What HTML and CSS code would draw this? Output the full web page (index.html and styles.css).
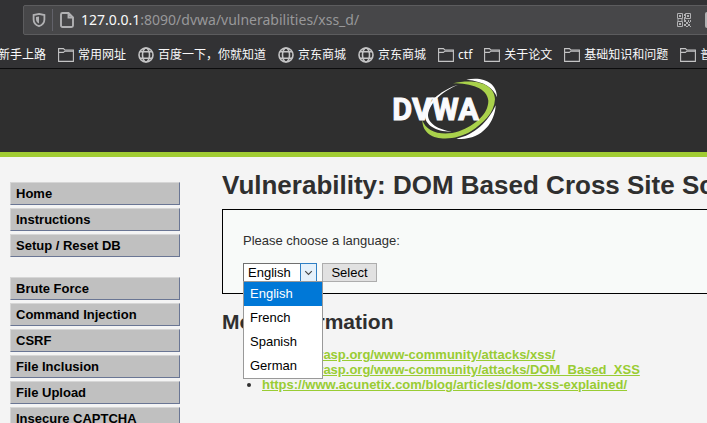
FILE: index.html
```html
<!DOCTYPE html>
<html lang="en">
<head>
<meta charset="utf-8">
<title>Vulnerability: DOM Based Cross Site Scripting (XSS)</title>
<link rel="stylesheet" href="styles.css">
</head>
<body>
<svg class="defs" aria-hidden="true">
  <symbol id="folder" viewBox="0 0 16 16"><path d="M.6 14.400V1.600H5.400L6.800 3H15.400V14.400zM.6 5.400H5.400L6.800 4.200H15" fill="none" stroke="currentColor" stroke-width="1.100"/></symbol>
  <symbol id="globe" viewBox="0 0 16 16"><g fill="none" stroke="currentColor" stroke-width="1.600"><circle cx="8" cy="8" r="7"/><ellipse cx="8" cy="8" rx="3.500" ry="7"/><path d="M2 4.700h12M2 11.300h12"/></g></symbol>
</svg>
<div class="browser">
  <div class="toolbar">
    <div class="urlbar">
      <svg class="shield" viewBox="0 0 14 16"><path d="M7 1.800 12.400 3V7.500c0 3.500-2.400 5.700-5.400 6.700C4 13.200 1.600 11 1.600 7.500V3z" fill="none" stroke="currentColor" stroke-width="1.800"/><path d="M7 4.500v7C5 10.500 4 9 4 7V5z" fill="currentColor"/></svg>
      <span class="divider"></span>
      <svg class="page-icon" viewBox="0 0 14 16"><path d="M2.500 1H8.500L13 5.500V13.500a1.500 1.500 0 0 1-1.500 1.500h-9A1.500 1.500 0 0 1 1 13.500v-11A1.500 1.500 0 0 1 2.500 1zM8.500 1v4.500H13" fill="none" stroke="currentColor" stroke-width="1.900"/></svg>
      <span class="url"><b>127.0.0.1</b>:8090/dvwa/vulnerabilities/xss_d/</span>
      <svg class="qr" viewBox="0 0 14 14"><path d="M.5.5h5v5h-5zM8.500.5h5v5h-5zM.5 8.500h5v5h-5z" fill="none" stroke="currentColor"/><path d="M2 2h2v2H2zM10 2h2v2h-2zM2 10h2v2H2zM7 1h1v2H7zM7 4h1v3H7zM7 7h2v2H7zM9 9h2v2H9zM11 7h1v2h-1zM13 7h1v2h-1zM7 11h2v2H7zM11 11h2v2h-2zM12 9h1v1h-1zM9 13h2v1H9zM13 13h1v1h-1zM0 6.500h2v1H0zM4 6.500h2v1H4z" fill="currentColor"/></svg>
      <span class="edge"></span>
    </div>
  </div>
  <nav class="bookmarks">
    <a href="#">新手上路</a>
    <a href="#"><svg><use href="#folder"/></svg>常用网址</a>
    <a href="#"><svg><use href="#globe"/></svg>百度一下，你就知道</a>
    <a href="#"><svg><use href="#globe"/></svg>京东商城</a>
    <a href="#"><svg><use href="#globe"/></svg>京东商城</a>
    <a href="#"><svg><use href="#folder"/></svg>ctf</a>
    <a href="#"><svg><use href="#folder"/></svg>关于论文</a>
    <a href="#"><svg><use href="#folder"/></svg>基础知识和问题</a>
    <a href="#"><svg><use href="#folder"/></svg>普</a>
  </nav>
</div>
<div class="page">
  <header class="header">
    <svg class="logo" viewBox="36 24 324 186" role="img" aria-label="DVWA">
      <path d="M238 44C196 56 142 92 138 136C138 166 172 186 218 185C178 178 146 160 147 134C152 96 196 60 238 44z" fill="#fff"/>
      <path d="M262 29C312 18 354 38 354 82C344 54 316 34 262 29z" fill="#fff"/>
      <path d="M350 106C348 160 304 214 232 206C286 196 328 154 350 106z" fill="#fff"/>
      <path d="M222 40C284 26 346 38 348 88C346 130 312 160 276 184C220 218 130 216 130 150C140 186 190 200 240 184C290 164 328 132 328 92C324 54 276 40 222 40z" fill="#a9d14b"/>
      <text x="40" y="151" class="logo-text">DVWA</text>
    </svg>
  </header>
  <div class="columns">
    <nav class="menu">
      <ul>
        <li><a href="#">Home</a></li>
        <li><a href="#">Instructions</a></li>
        <li><a href="#">Setup / Reset DB</a></li>
      </ul>
      <ul>
        <li><a href="#">Brute Force</a></li>
        <li><a href="#">Command Injection</a></li>
        <li><a href="#">CSRF</a></li>
        <li><a href="#">File Inclusion</a></li>
        <li><a href="#">File Upload</a></li>
        <li><a href="#">Insecure CAPTCHA</a></li>
      </ul>
    </nav>
    <main class="content">
      <h1>Vulnerability: DOM Based Cross Site Scripting (XSS)</h1>
      <form class="panel">
        <label for="language">Please choose a language:</label>
        <div class="controls">
          <div class="picker">
            <select id="language"><option>English</option><option>French</option><option>Spanish</option><option>German</option></select>
            <svg class="arrow" viewBox="0 0 16 17"><path d="M4.500 7 8 10.500 11.500 7" fill="none" stroke="#444" stroke-width="1.200"/></svg>
            <ul class="options" role="listbox" aria-label="Language">
              <li role="option" aria-selected="true">English</li>
              <li role="option">French</li>
              <li role="option">Spanish</li>
              <li role="option">German</li>
            </ul>
          </div>
          <button type="button">Select</button>
        </div>
      </form>
      <h2>More Information</h2>
      <ul class="links">
        <li><a href="#">https://owasp.org/www-community/attacks/xss/</a></li>
        <li><a href="#">https://owasp.org/www-community/attacks/DOM_Based_XSS</a></li>
        <li><a href="#">https://www.acunetix.com/blog/articles/dom-xss-explained/</a></li>
      </ul>
    </main>
  </div>
</div>
</body>
</html>
```
FILE: styles.css
```css
* { box-sizing: border-box; }
body {
  margin: 0;
  height: 100vh;
  overflow: hidden;
  background: #f4f4f4;
  color: #2f2f2f;
  font: 13px/15px "Liberation Sans", Arial, sans-serif;
}
ul { margin: 0; padding: 0; list-style: none; }
.defs { display: none; }

.browser {
  background: #323234;
  border-bottom: 1px solid #0c0c0d;
  color: #f9f9fa;
}
.toolbar { padding: 5px 0 6px 23px; overflow: hidden; }
.urlbar {
  display: flex;
  align-items: center;
  height: 30px;
  margin-right: -4px;
  padding-left: 8px;
  background: #474749;
  border: 1px solid #5c5c5e;
  border-radius: 2px;
  color: #b1b1b3;
}
.shield, .page-icon { width: 14px; height: 16px; }
.divider { width: 1px; height: 22px; margin: 0 7px 0 6px; background: #62626a; }
.url {
  flex: 1;
  margin-left: 7px;
  color: #98989a;
  font: 14px/20px "Noto Sans", sans-serif;
  white-space: nowrap;
}
.url b { color: #f9f9fa; font-weight: 400; }
.qr { width: 14px; height: 14px; }
.edge { width: 5px; height: 16px; margin-left: 14px; background: #b1b1b3; border-radius: 2px 0 0 2px; }

.bookmarks { display: flex; gap: 12px; height: 27px; margin-left: -2px; overflow: hidden; }
.bookmarks a {
  display: flex;
  flex: none;
  align-items: center;
  gap: 4px;
  color: inherit;
  font: 12px/18px "Noto Sans", "Noto Sans CJK SC", sans-serif;
  text-decoration: none;
}
.bookmarks svg { width: 16px; height: 16px; color: #c4c4c5; }

.page { min-width: 890px; }
.header {
  padding: 9px 0 12px;
  background: #2f2f2f;
  border-bottom: 5px solid #a1cc33;
  text-align: center;
}
.logo { display: block; width: 108px; height: 62px; margin: 0 auto; }
.logo-text { fill: #fafafc; stroke: #fafafc; stroke-width: 3px; font: 700 92px Roboto, sans-serif; }

.columns { display: flex; gap: 42px; padding: 0 10px; }
.menu { flex: none; width: 170px; padding-top: 25px; }
.menu ul { display: grid; gap: 3px; margin-bottom: 20px; }
.menu a {
  display: block;
  height: 23px;
  padding: 3px 5px;
  background: #c0c0c0;
  border: 1px solid;
  border-color: #d6d6d6 #6a7694 #6a7694 #d6d6d6;
  color: #000;
  font-weight: 700;
  text-decoration: none;
}

.content { flex: 1; padding-top: 12px; }
h1 { margin: 0 0 8px; font-size: 26px; line-height: 32px; white-space: nowrap; }
.panel {
  height: 85px;
  padding: 23px 20px;
  background: #f8faf9;
  border: 1px solid #000;
}
.panel label { display: block; margin-bottom: 15px; }
.controls { display: flex; gap: 5px; }
.picker { position: relative; }
.picker select {
  display: block;
  width: 74px;
  height: 19px;
  padding: 0 4px;
  appearance: none;
  background: #fff;
  border: 1px solid #707070;
  border-radius: 0;
  color: #000;
  font: inherit;
}
.arrow {
  position: absolute;
  top: 0;
  right: 0;
  width: 17px;
  height: 19px;
  background: #e5f1fb;
  border: 1px solid #2f7fc4;
  pointer-events: none;
}
.options {
  position: absolute;
  top: 18px;
  left: 0;
  width: 80px;
  background: #fff;
  border: 1px solid #999;
  color: #000;
}
.options li { padding: 0 6px; line-height: 24px; }
.options [aria-selected] { background: #0078d7; color: #fff; }
.controls button {
  width: 55px;
  height: 19px;
  padding: 0;
  background: #e1e1e1;
  border: 1px solid #adadad;
  color: #000;
  font: inherit;
}
h2 { margin: 16px 0 13px; font-size: 21px; line-height: 24px; }
.links { padding-left: 40px; list-style: disc; }
.links a { color: #9c3; font-weight: 700; }
```
